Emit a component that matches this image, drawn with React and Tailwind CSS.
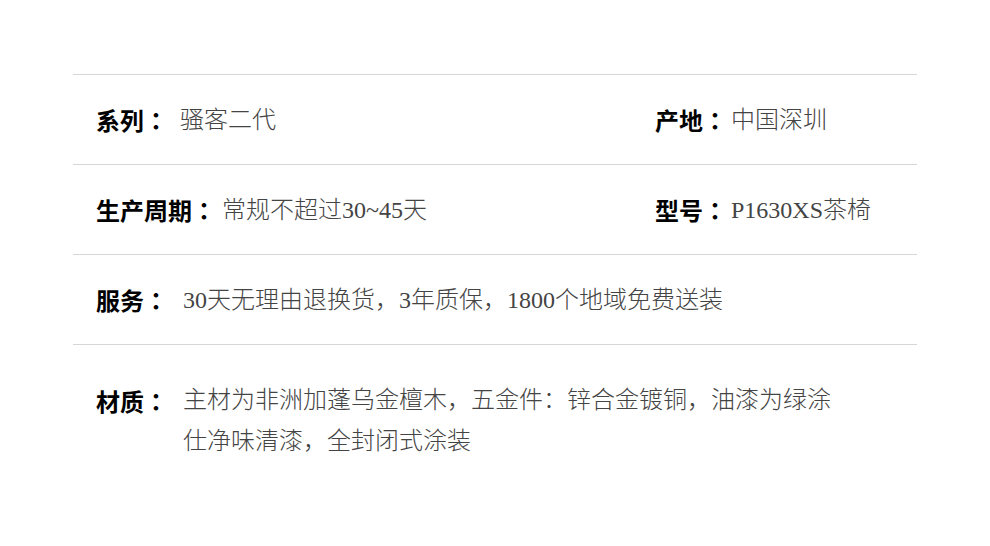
import React from 'react';

const font = { fontFamily: '"Liberation Serif", "Noto Sans CJK SC", serif' };

const Field = ({ label, value, labelWidth }) => (
  <div className="flex items-center">
    <span className={`${labelWidth} shrink-0 font-bold text-black font-['Noto_Sans_CJK_TC',sans-serif]`}>{label}</span>
    <span className="font-light text-[#444]">{value}</span>
  </div>
);

export default function App() {
  return (
    <div className="min-h-screen w-full bg-white pt-[74px] text-[24px]" style={font}>
      <div className="mx-[73px] w-[844px]">
        {/* 系列 / 产地 */}
        <div className="h-[90px] border-t border-[#d6d6d6] flex items-center pl-[23px]">
          <div className="w-[559px]">
            <Field label="系列：" value="骚客二代" labelWidth="w-[84px]" />
          </div>
          <Field label="产地：" value="中国深圳" labelWidth="w-[76px]" />
        </div>

        {/* 生产周期 / 型号 */}
        <div className="h-[90px] border-t border-[#d6d6d6] flex items-center pl-[23px]">
          <div className="w-[559px]">
            <Field label="生产周期：" value="常规不超过30~45天" labelWidth="w-[126px]" />
          </div>
          <Field label="型号：" value="P1630XS茶椅" labelWidth="w-[76px]" />
        </div>

        {/* 服务 */}
        <div className="h-[90px] border-t border-[#d6d6d6] flex items-center pl-[23px]">
          <Field label="服务：" value="30天无理由退换货，3年质保，1800个地域免费送装" labelWidth="w-[87px]" />
        </div>

        {/* 材质 */}
        <div className="border-t border-[#d6d6d6] flex pl-[23px] pt-[35px] leading-[41px]">
          <span className="w-[87px] shrink-0 font-bold text-black font-['Noto_Sans_CJK_TC',sans-serif]">材质：</span>
          <span className="w-[662px] shrink-0 font-light text-[#444]">
            主材为非洲加蓬乌金檀木，五金件：锌合金镀铜，油漆为绿涂仕净味清漆，全封闭式涂装
          </span>
        </div>
      </div>
    </div>
  );
}
